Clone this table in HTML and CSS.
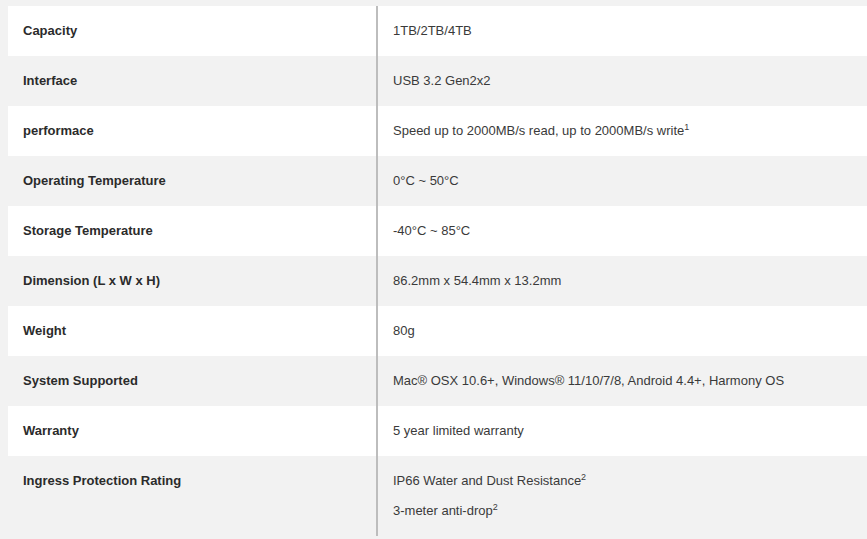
FILE: index.html
```
<!DOCTYPE html>
<html>
<head>
<meta charset="utf-8">
<link rel="stylesheet" href="styles.css">
</head>
<body>
<div class="specs">
  <div class="row"><div class="label">Capacity</div><div class="value"><p>1TB/2TB/4TB</p></div></div>
  <div class="row"><div class="label">Interface</div><div class="value"><p>USB 3.2 Gen2x2</p></div></div>
  <div class="row"><div class="label">performace</div><div class="value"><p>Speed up to 2000MB/s read, up to 2000MB/s write<sup>1</sup></p></div></div>
  <div class="row"><div class="label">Operating Temperature</div><div class="value"><p>0°C ~ 50°C</p></div></div>
  <div class="row"><div class="label">Storage Temperature</div><div class="value"><p>-40°C ~ 85°C</p></div></div>
  <div class="row"><div class="label">Dimension (L x W x H)</div><div class="value"><p>86.2mm x 54.4mm x 13.2mm</p></div></div>
  <div class="row"><div class="label">Weight</div><div class="value"><p>80g</p></div></div>
  <div class="row"><div class="label">System Supported</div><div class="value"><p>Mac® OSX 10.6+, Windows® 11/10/7/8, Android 4.4+, Harmony OS</p></div></div>
  <div class="row"><div class="label">Warranty</div><div class="value"><p>5 year limited warranty</p></div></div>
  <div class="row"><div class="label">Ingress Protection Rating</div><div class="value"><p>IP66 Water and Dust Resistance<sup>2</sup></p><p>3-meter anti-drop<sup>2</sup></p></div></div>
</div>
</body>
</html>
```
FILE: styles.css
```
html, body {
  margin: 0;
  padding: 0;
  background: #f2f2f2;
  overflow: hidden;
}
body {
  font-family: "Liberation Sans", Arial, sans-serif;
  font-size: 13px;
  color: #333;
}
.specs {
  margin: 6px 0 0 8px;
  width: 900px;
  display: flex;
  flex-direction: column;
}
.row {
  display: grid;
  grid-template-columns: 368px 1fr;
}
.row:nth-child(odd) {
  background: #fff;
}
.label {
  font-weight: bold;
  color: #2b2b2b;
  padding: 16px 15px;
  line-height: 18px;
}
.value {
  border-left: 2px solid #bdbdbd;
  padding: 16px 15px;
  color: #3a3a3a;
  line-height: 18px;
}
.value p {
  margin: 0;
}
.value p + p {
  margin-top: 12px;
}
sup {
  font-size: 9px;
  line-height: 0;
  vertical-align: 5px;
}
```
